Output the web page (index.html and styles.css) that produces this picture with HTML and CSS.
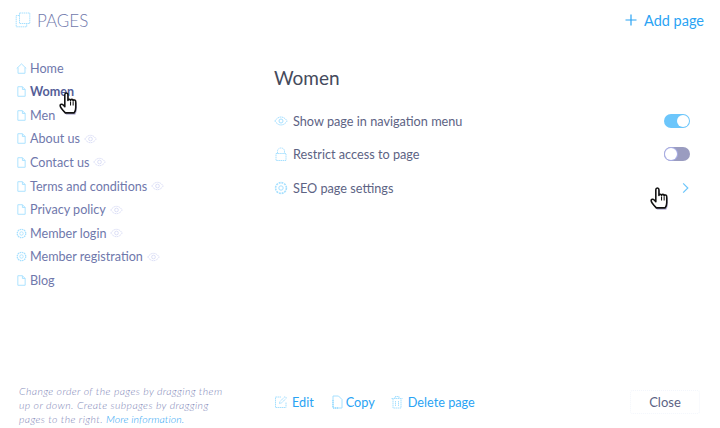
FILE: index.html
```html
<!DOCTYPE html>
<html lang="en">
<head>
<meta charset="utf-8">
<title>Pages</title>
<link rel="stylesheet" href="styles.css">
</head>
<body>
<svg class="defs" width="0" height="0" aria-hidden="true">
  <symbol id="i-page" viewBox="0 0 10 12"><path d="M1 .8h5l3 3v7.400H1zM6 .8v3h3" fill="none" stroke="currentColor"/></symbol>
  <symbol id="i-home" viewBox="0 0 12 12"><path d="M.8 6 6 1l5.200 5M2.200 5v6.200h7.600V5" fill="none" stroke="currentColor"/></symbol>
  <symbol id="i-gear" viewBox="0 0 14 14"><circle cx="7" cy="7" r="5.400" fill="none" stroke="currentColor" stroke-width="1.600" stroke-dasharray="2 .8"/><circle cx="7" cy="7" r="2.200" fill="none" stroke="currentColor"/></symbol>
  <symbol id="i-eye" viewBox="0 0 14 10"><path d="M.8 5C3 2 5 1 7 1s4 1 6.200 4C11 8 9 9 7 9S3 8 .8 5z" fill="none" stroke="currentColor" stroke-dasharray="1.600 .5"/><circle cx="7" cy="5" r="2" fill="none" stroke="currentColor"/></symbol>
  <symbol id="i-hand" viewBox="0 0 20 24">
    <path d="M6 21c-2-2-5-5-5-7 0-1.500 2-1.500 3-.5l1.500 1.500V3.500c0-2.200 3-2.200 3 0V9c0-1.500 2.500-1.500 2.500 0 0-1.300 2.500-1.300 2.500.3.300-1 2.500-.8 2.500 1V16c0 2-.5 3.500-1.500 5z" fill="#b9b6d8" transform="translate(1 1.800)"/>
    <path d="M6 21c-2-2-5-5-5-7 0-1.500 2-1.500 3-.5l1.500 1.500V3.500c0-2.200 3-2.200 3 0V9c0-1.500 2.500-1.500 2.500 0 0-1.300 2.500-1.300 2.500.3.300-1 2.500-.8 2.500 1V16c0 2-.5 3.500-1.500 5z" fill="#fff" stroke="#111" stroke-width="1.500" stroke-linejoin="round"/>
    <path d="M11 10v4M13.500 10v4" stroke="#111" fill="none"/>
  </symbol>
</svg>

<div class="app">
  <header class="top">
    <h1 class="brand">
      <svg class="brand-icon" viewBox="0 0 16 16"><path d="M4.500 1h10.300v10.500H4.500z M4.500 3.500H1.200v11.300h10.500v-3.300" fill="none" stroke="currentColor" stroke-dasharray="1.500 .6"/></svg>
      PAGES
    </h1>
    <a class="add"><svg class="plus" viewBox="0 0 12 12"><path d="M6 .5v11M.5 6h11" stroke="currentColor" stroke-width="1.200"/></svg>Add page</a>
  </header>

  <aside class="side">
    <ul class="tree">
      <li class="item"><svg class="ico"><use href="#i-home"/></svg>Home</li>
      <li class="item current"><svg class="ico"><use href="#i-page"/></svg>Women<svg class="hand hand-a"><use href="#i-hand"/></svg></li>
      <li class="item"><svg class="ico"><use href="#i-page"/></svg>Men</li>
      <li class="item"><svg class="ico"><use href="#i-page"/></svg>About us<svg class="hid"><use href="#i-eye"/></svg></li>
      <li class="item"><svg class="ico"><use href="#i-page"/></svg>Contact us<svg class="hid"><use href="#i-eye"/></svg></li>
      <li class="item"><svg class="ico"><use href="#i-page"/></svg>Terms and conditions<svg class="hid"><use href="#i-eye"/></svg></li>
      <li class="item"><svg class="ico"><use href="#i-page"/></svg>Privacy policy<svg class="hid"><use href="#i-eye"/></svg></li>
      <li class="item"><svg class="ico"><use href="#i-gear"/></svg>Member login<svg class="hid"><use href="#i-eye"/></svg></li>
      <li class="item"><svg class="ico"><use href="#i-gear"/></svg>Member registration<svg class="hid"><use href="#i-eye"/></svg></li>
      <li class="item"><svg class="ico"><use href="#i-page"/></svg>Blog</li>
    </ul>
    <p class="note">Change order of the pages by dragging them up or down. Create subpages by dragging pages to the right. <a class="more">More information.</a></p>
  </aside>

  <main class="main">
    <h2 class="title">Women</h2>
    <div class="rows">
      <div class="row"><svg class="row-ico"><use href="#i-eye"/></svg><span class="label">Show page in navigation menu</span><span class="toggle on"></span></div>
      <div class="row"><svg class="row-ico" viewBox="0 0 14 14"><path d="M3.500 6.500V4a3.500 3 0 0 1 7 0v2.500M2 6.500h10v7H2z" fill="none" stroke="currentColor" stroke-dasharray="1.500 .6"/></svg><span class="label">Restrict access to page</span><span class="toggle off"></span></div>
      <div class="row"><svg class="row-ico"><use href="#i-gear"/></svg><span class="label">SEO page settings</span><svg class="chev" viewBox="0 0 6 10"><path d="M1 1l4 4-4 4" fill="none" stroke="currentColor"/></svg><svg class="hand hand-b"><use href="#i-hand"/></svg></div>
    </div>
    <footer class="actions">
      <a class="act"><svg class="act-ico" viewBox="0 0 14 14"><path d="M7 2H1.500v10.500H12V7M5.500 8.500 6 6.500 11 1.500l1.500 1.500-5 5z" fill="none" stroke="currentColor" stroke-dasharray="1.500 .5"/></svg>Edit</a>
      <a class="act act-copy"><svg class="act-ico" viewBox="0 0 14 14"><path d="M3 1h5.500L12 4.500V13H3z" fill="none" stroke="currentColor"/><path d="M3 5v8h6" fill="none" stroke="currentColor" stroke-width="2" stroke-dasharray="1 1"/></svg>Copy</a>
      <a class="act act-del"><svg class="act-ico" viewBox="0 0 14 14"><path d="M1.500 3.500h11M5 3.500V1.500h4v2M3 3.500V13h8V3.500M5.500 6v5M8.500 6v5" fill="none" stroke="currentColor" stroke-dasharray="1.500 .5"/></svg>Delete page</a>
      <button class="close">Close</button>
    </footer>
  </main>
</div>
</body>
</html>
```
FILE: styles.css
```css
* { box-sizing: border-box; }
html, body { margin: 0; padding: 0; background: #fff; }
body { font-family: "Lato", "Liberation Sans", sans-serif; overflow: hidden; }
.defs { position: absolute; }
a { cursor: pointer; }

.app {
  width: 720px;
  height: 428px;
  display: grid;
  grid-template-columns: 274px 1fr;
  grid-template-rows: 40px 1fr;
}

.top {
  grid-column: 1 / -1;
  display: flex;
  align-items: center;
  justify-content: space-between;
  padding: 0 16px 0 15px;
}
.brand {
  margin: 0;
  display: flex;
  align-items: center;
  gap: 6px;
  font-size: 17px;
  font-weight: 300;
  color: #6f78ac;
}
.brand-icon { width: 16px; height: 16px; color: #a6e0ff; }
.add {
  display: flex;
  align-items: center;
  gap: 7px;
  font-size: 14.500px;
  color: #2aa3f4;
}
.plus { width: 12px; height: 12px; }

.side {
  display: flex;
  flex-direction: column;
  justify-content: space-between;
  padding: 16.500px 0 2px 16px;
}
.tree { list-style: none; margin: 0; padding: 0; }
.item {
  position: relative;
  display: flex;
  align-items: center;
  height: 23.550px;
  font-size: 12.600px;
  color: #6f78ac;
}
.current { font-weight: 700; color: #555e98; }
.ico { width: 11px; height: 11px; margin-right: 3px; color: #a6e0ff; flex: none; }
.hid { width: 13px; height: 10px; margin-left: 4px; color: #d9dcf5; flex: none; }
.hand { position: absolute; width: 21px; height: 25px; }
.hand-a { left: 43px; top: 11px; }
.hand-b { left: 376px; top: 15px; }

.note {
  margin: 0 0 0 3px;
  width: 208px;
  font-size: 10.500px;
  letter-spacing: 0.38px;
  line-height: 14px;
  font-style: italic;
  font-weight: 300;
  color: #7f88b8;
}
.more { color: #2aa3f4; letter-spacing: 0.1px; }

.main {
  display: flex;
  flex-direction: column;
  padding: 26px 30px 14px 0;
}
.title {
  margin: 0;
  font-size: 19px;
  line-height: 24px;
  font-weight: 400;
  color: #454a5c;
}
.rows { margin-top: 14px; }
.row {
  position: relative;
  display: flex;
  align-items: center;
  height: 33.500px;
  font-size: 12.700px;
  color: #5d6384;
}
.row-ico { width: 14px; height: 14px; margin-right: 5px; color: #a6e0ff; flex: none; }
.label { flex: 1; }
.toggle {
  position: relative;
  width: 26px;
  height: 14px;
  border-radius: 7px;
  flex: none;
}
.toggle::after {
  content: "";
  position: absolute;
  top: 1px;
  width: 12px;
  height: 12px;
  border-radius: 50%;
  background: #fff;
}
.on { background: #6cc6fb; }
.on::after { right: 1px; }
.off { background: #9a9cc0; }
.off::after { left: 1px; box-shadow: 0 0 0 1px #a9aee6; }
.chev { width: 7px; height: 12px; margin-right: 1px; color: #6cc6fb; }

.actions {
  margin-top: auto;
  display: flex;
  align-items: center;
  gap: 16px;
}
.act {
  display: flex;
  align-items: center;
  gap: 4px;
  font-size: 12.700px;
  color: #2aa3f4;
}
.act-copy { gap: 2px; }
.act-del { margin-left: -1px; }
.act-ico { width: 14px; height: 14px; color: #a6e0ff; flex: none; }
.close {
  margin-left: auto;
  margin-right: -10px;
  width: 70px;
  height: 24px;
  border: 1px dotted #f3f6fc;
  border-radius: 3px;
  background: #fff;
  font: 13px "Lato", "Liberation Sans", sans-serif;
  color: #5d6384;
}
```
